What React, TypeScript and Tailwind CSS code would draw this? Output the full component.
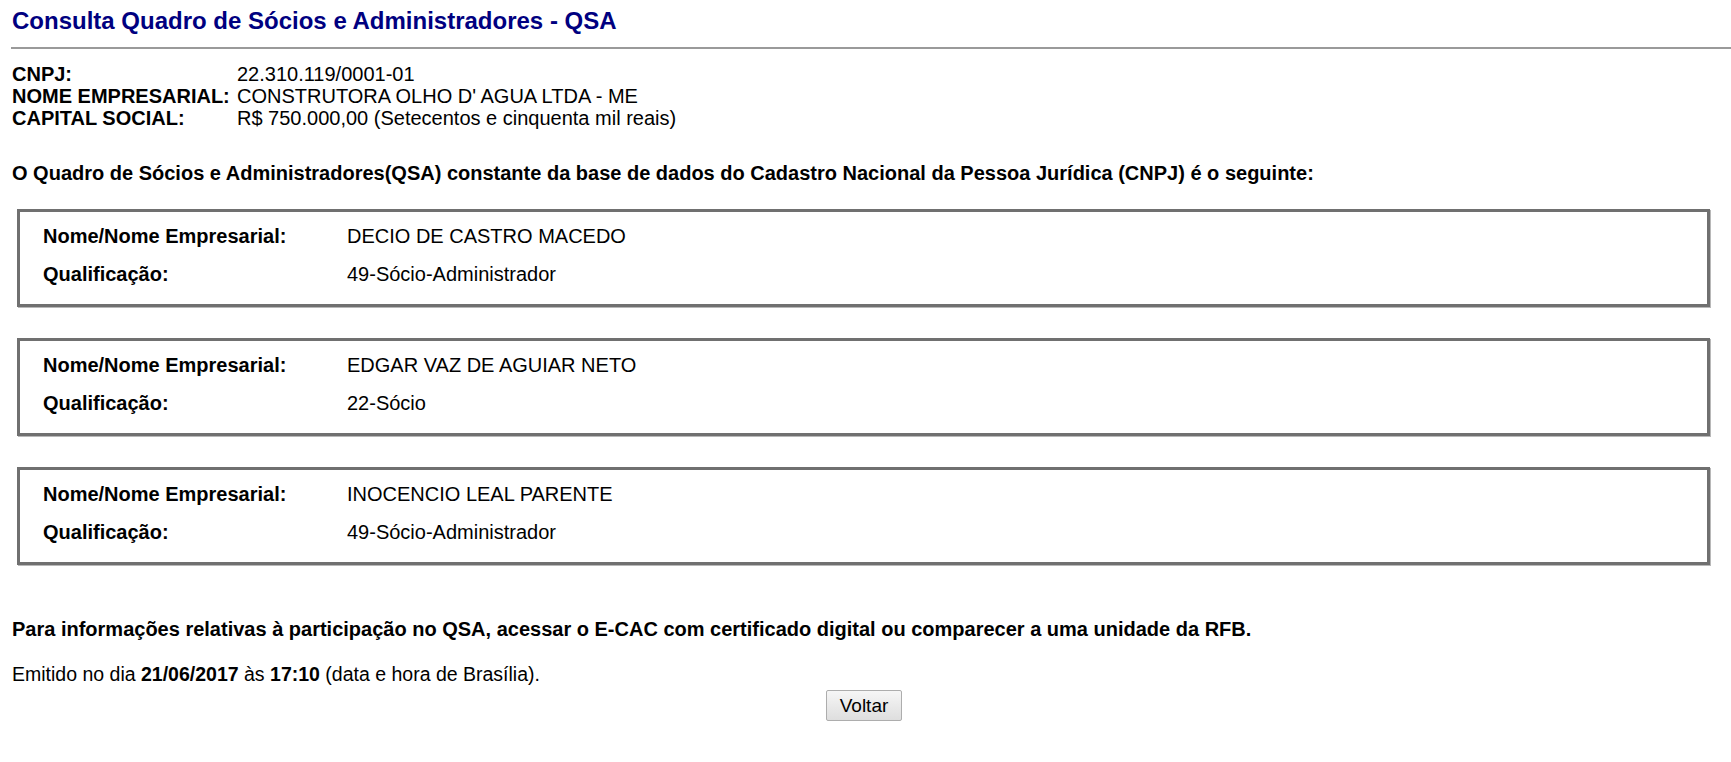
export default function App() {
  const socios = [
    { nome: "DECIO DE CASTRO MACEDO", qualificacao: "49-Sócio-Administrador" },
    { nome: "EDGAR VAZ DE AGUIAR NETO", qualificacao: "22-Sócio" },
    { nome: "INOCENCIO LEAL PARENTE", qualificacao: "49-Sócio-Administrador" },
  ];

  return (
    <div className="min-h-screen bg-white text-black font-['Liberation_Sans',Arial,sans-serif]">
      {/* titulo */}
      <h1 className="pl-3 pt-[7px] text-[24px] leading-[28px] font-bold text-[#000080]">
        Consulta Quadro de Sócios e Administradores - QSA
      </h1>
      <hr className="ml-[11px] mt-[12px] border-0 h-[2px] bg-[#9a9a9a]" />

      <div className="px-3 pt-[14px]">
        <div className="grid grid-cols-[225px_1fr] text-[20px] leading-[22px]">
          <span className="font-bold">CNPJ:</span>
          <span>22.310.119/0001-01</span>
          <span className="font-bold">NOME EMPRESARIAL:</span>
          <span>CONSTRUTORA OLHO D' AGUA LTDA - ME</span>
          <span className="font-bold">CAPITAL SOCIAL:</span>
          <span>R$ 750.000,00 (Setecentos e cinquenta mil reais)</span>
        </div>

        <p className="mt-[33px] text-[20px] leading-[22px] font-bold">
          O Quadro de Sócios e Administradores(QSA) constante da base de dados do Cadastro Nacional da Pessoa Jurídica (CNPJ) é o seguinte:
        </p>
      </div>

      <div className="ml-[17px] mr-[21px] mt-[25px] flex flex-col gap-[31px]">
        {socios.map((s) => (
          <div
            key={s.nome}
            className="border-[3px] border-[#707070] shadow-[1px_1px_0_#b8b8b8] pl-[23px] pt-[5px] pb-[11px]"
          >
            <div className="grid grid-cols-[304px_1fr] text-[20px] leading-[38px]">
              <span className="font-bold">Nome/Nome Empresarial:</span>
              <span>{s.nome}</span>
              <span className="font-bold">Qualificação:</span>
              <span>{s.qualificacao}</span>
            </div>
          </div>
        ))}
      </div>

      <div className="px-3">
        <p className="mt-[53px] text-[20px] leading-[22px] font-bold">
          Para informações relativas à participação no QSA, acessar o E-CAC com certificado digital ou comparecer a uma unidade da RFB.
        </p>
        <p className="mt-[23px] text-[19.5px] leading-[22px]">
          Emitido no dia <b>21/06/2017</b> às <b>17:10</b> (data e hora de Brasília).
        </p>
        <div className="flex justify-center mt-[5px] pr-[3px]">
          <button className="h-[31px] w-[76px] border border-[#adadad] rounded-[2px] bg-gradient-to-b from-[#f6f6f6] to-[#dedede] text-[19px] leading-none text-black">
            Voltar
          </button>
        </div>
      </div>
    </div>
  );
}
